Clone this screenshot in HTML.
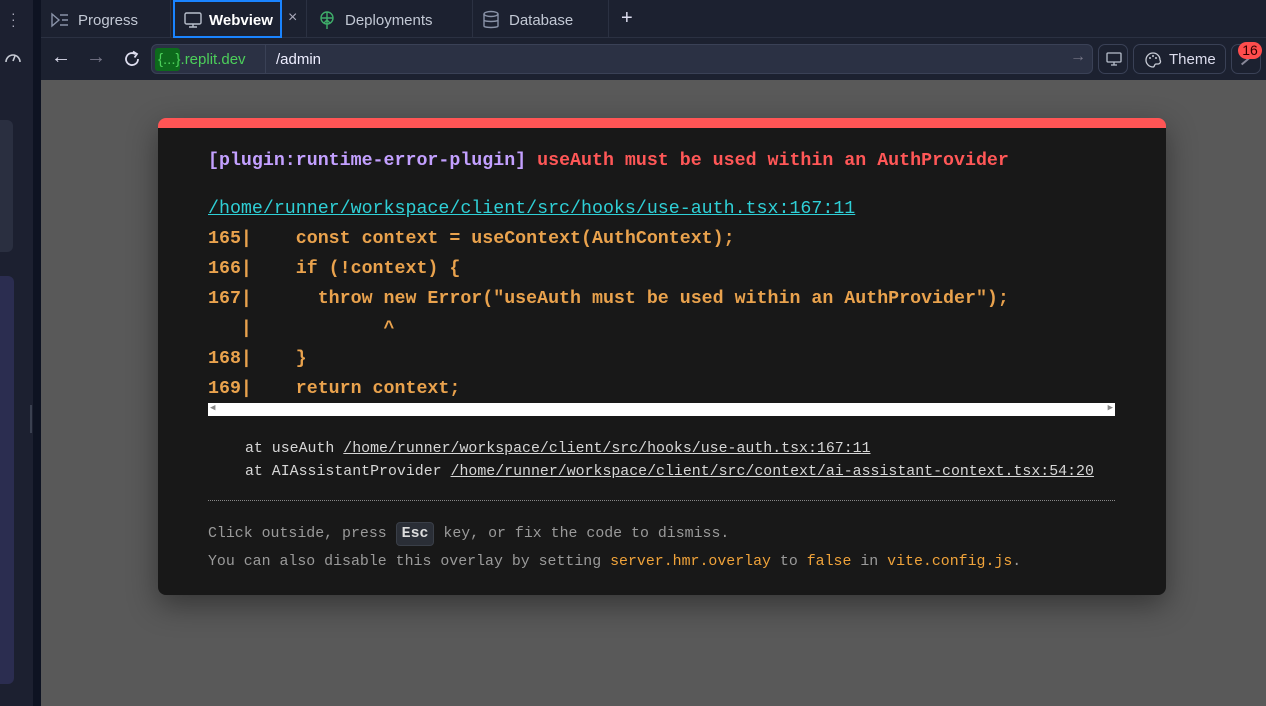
<!DOCTYPE html>
<html><head><meta charset="utf-8"><style>
*{box-sizing:border-box;margin:0;padding:0}
body{width:1266px;height:706px;overflow:hidden;background:#595959;font-family:"Liberation Sans",sans-serif;position:relative}
.side{position:absolute;left:0;top:0;width:33px;height:706px;background:#1c2030}
.strip{position:absolute;left:33px;top:0;width:8px;height:706px;background:#0e1322}
.tabs{position:absolute;left:41px;top:0;width:1225px;height:38px;background:#1c2130;border-bottom:1px solid #2b3142}
.tab{position:absolute;top:0;height:38px;display:flex;align-items:center;color:#c2c8d4;font-size:15px;border-right:1px solid #2b3142;padding-top:2px}
.addr{position:absolute;left:41px;top:38px;width:1225px;height:42px;background:#1c2130}
.url{position:absolute;left:151px;top:44px;width:942px;height:30px;background:#2b3144;border:1px solid #3a4156;border-radius:6px}
.btn{position:absolute;top:44px;height:30px;border:1px solid #3a4156;border-radius:7px}
.ov{position:absolute;left:158px;top:118px;width:1008px;height:477px;background:#181818;border-radius:8px;border-top:10px solid #ff5555;box-shadow:0 10px 30px rgba(0,0,0,.4);font-family:"Liberation Mono",monospace}
.t{position:absolute;white-space:pre;font-size:18.3px;font-weight:bold}
.code{position:absolute;left:50px;color:#e9a24d;font-size:18.3px;white-space:pre;font-weight:bold}
.s{position:absolute;white-space:pre;font-size:14.9px;color:#d6d6d6}
.s u{text-decoration:underline}
.f{position:absolute;left:50px;white-space:pre;font-size:14.9px;color:#9a9a9a}
.o{color:#f0a33a}
</style></head><body>
<div class="side">
 <div style="position:absolute;left:11px;top:10px;color:#aab;font-size:14px;line-height:6px">·<br>·<br>·</div>
 <svg style="position:absolute;left:4px;top:50px" width="18" height="14" viewBox="0 0 18 14"><path d="M2 12A7 7 0 1 1 16 12" fill="none" stroke="#c8ccd6" stroke-width="1.6"/><path d="M9 11L11 6" stroke="#c8ccd6" stroke-width="1.6"/></svg>
 <div style="position:absolute;left:0;top:120px;width:13px;height:132px;background:#2a2f40;border-radius:0 6px 6px 0"></div>
 <div style="position:absolute;left:0;top:276px;width:14px;height:408px;background:#2b2d50;border-radius:0 6px 6px 0"></div>
</div>
<div class="strip"><div style="position:absolute;left:-3px;top:405px;width:2px;height:28px;background:#3a4050"></div></div>
<div class="tabs">
 <div class="tab" style="left:0;width:130px;padding-left:9px">
  <svg width="20" height="16" viewBox="0 0 20 16" style="margin-right:8px"><path d="M2 2L9 8L2 14Z" fill="none" stroke="#8a93a8" stroke-width="1.4"/><path d="M10 3H18M12 8H18M10 13H18" stroke="#8a93a8" stroke-width="1.4"/></svg>Progress</div>
 <div class="tab" style="left:132px;width:109px;border:2px solid #1a84ff;color:#fff;font-weight:bold;padding-left:8px">
  <svg width="20" height="18" viewBox="0 0 20 18" style="margin-right:6px"><rect x="2" y="2" width="16" height="11" rx="1.5" fill="none" stroke="#b8bfcc" stroke-width="1.4"/><path d="M10 13V16M6 16H14" stroke="#b8bfcc" stroke-width="1.4"/></svg>Webview</div>
 <div style="position:absolute;left:247px;top:9px;color:#aab;font-size:16px">×</div>
 <div class="tab" style="left:265px;width:167px;border-left:1px solid #2b3142;padding-left:10px">
  <svg width="20" height="20" viewBox="0 0 20 20" style="margin-right:8px"><circle cx="10" cy="8" r="6" fill="none" stroke="#3fae6a" stroke-width="1.4"/><path d="M4 8H16M10 2V19M7 13L10 10L13 13" fill="none" stroke="#3fae6a" stroke-width="1.4"/></svg>Deployments</div>
 <div class="tab" style="left:432px;width:136px;padding-left:8px">
  <svg width="20" height="20" viewBox="0 0 20 20" style="margin-right:8px"><ellipse cx="10" cy="4" rx="7" ry="2.5" fill="none" stroke="#8a93a8" stroke-width="1.4"/><path d="M3 4V16C3 18 17 18 17 16V4M3 10C3 12 17 12 17 10" fill="none" stroke="#8a93a8" stroke-width="1.4"/></svg>Database</div>
 <div style="position:absolute;left:580px;top:7px;color:#dde;font-size:20px">+</div>
</div>
<div class="addr">
 <div style="position:absolute;left:10px;top:8px;color:#dde;font-size:20px">←</div>
 <div style="position:absolute;left:45px;top:8px;color:#778;font-size:20px">→</div>
 <svg style="position:absolute;left:81px;top:11px" width="20" height="20" viewBox="0 0 20 20"><path d="M16 10A6 6 0 1 1 13.5 5.2" fill="none" stroke="#dde" stroke-width="1.8"/><path d="M11 2.5L15 5L12.5 8.5" fill="none" stroke="#dde" stroke-width="1.8"/></svg>
</div>
<div class="url">
 <div style="position:absolute;left:3px;top:3px;height:23px;width:25px;background:#0d6a1c;border-radius:3px"></div>
 <div style="position:absolute;left:6px;top:6px;color:#4ccf5a;font-size:15px">{...}.replit.dev</div>
 <div style="position:absolute;left:113px;top:0;width:1px;height:28px;background:#3a4156"></div>
 <div style="position:absolute;left:124px;top:6px;color:#eef;font-size:15px">/admin</div>
 <div style="position:absolute;left:918px;top:3px;color:#778;font-size:16px">→</div>
</div>
<div class="btn" style="left:1098px;width:30px">
 <svg style="position:absolute;left:6px;top:6px" width="18" height="16" viewBox="0 0 18 16"><rect x="2" y="2" width="14" height="9" rx="1" fill="none" stroke="#b8bfcc" stroke-width="1.3"/><path d="M9 11V14M6 14H12" stroke="#b8bfcc" stroke-width="1.3"/></svg></div>
<div class="btn" style="left:1133px;width:93px">
 <svg style="position:absolute;left:10px;top:6px" width="18" height="18" viewBox="0 0 18 18"><path d="M9 2A7 7 0 0 0 9 16C11 16 10 13 12 13H14A2.5 2.5 0 0 0 16 9A7 7 0 0 0 9 2Z" fill="none" stroke="#c8ccd6" stroke-width="1.3"/><circle cx="6" cy="7" r="1" fill="#c8ccd6"/><circle cx="9" cy="5" r="1" fill="#c8ccd6"/><circle cx="12" cy="7" r="1" fill="#c8ccd6"/></svg>
 <div style="position:absolute;left:35px;top:6px;color:#dde;font-size:15px">Theme</div></div>
<div class="btn" style="left:1231px;width:30px"><div style="position:absolute;left:8px;top:14px;width:14px;height:2px;background:#889;transform:rotate(-40deg)"></div></div>
<div style="position:absolute;left:1238px;top:42px;width:24px;height:17px;background:#ff4d4d;border-radius:9px;color:#300;font-size:14px;text-align:center;line-height:17px">16</div>

<div class="ov">
 <div class="t" style="left:50px;top:23px;color:#c3a0ff">[plugin:runtime-error-plugin] <span style="color:#ff5757">useAuth must be used within an AuthProvider</span></div>
 <div class="t" style="left:50px;top:71px;color:#2fcfd6;font-weight:normal;text-decoration:underline">/home/runner/workspace/client/src/hooks/use-auth.tsx:167:11</div>
 <div class="code" style="top:96px;line-height:30px">165|    const context = useContext(AuthContext);
166|    if (!context) {
167|      throw new Error("useAuth must be used within an AuthProvider");
   |            ^
168|    }
169|    return context;</div>
 <div style="position:absolute;left:50px;top:275px;width:907px;height:13px;background:#fff"><span style="position:absolute;left:2px;top:0;font-size:9px;color:#888">◀</span><span style="position:absolute;right:2px;top:0;font-size:9px;color:#888">▶</span></div>
 <div class="s" style="left:87px;top:313px">at useAuth <u>/home/runner/workspace/client/src/hooks/use-auth.tsx:167:11</u></div>
 <div class="s" style="left:87px;top:336px">at AIAssistantProvider <u>/home/runner/workspace/client/src/context/ai-assistant-context.tsx:54:20</u></div>
 <div style="position:absolute;left:50px;top:372px;width:907px;border-top:1px dotted #888"></div>
 <div class="f" style="top:394px">Click outside, press <span style="display:inline-block;background:#2a2e36;border:1px solid #3a3f48;border-radius:4px;padding:3px 5px;color:#ddd;font-weight:bold">Esc</span> key, or fix the code to dismiss.</div>
 <div class="f" style="top:426px">You can also disable this overlay by setting <span class="o">server.hmr.overlay</span> to <span class="o">false</span> in <span class="o">vite.config.js</span>.</div>
</div>
</body></html>
